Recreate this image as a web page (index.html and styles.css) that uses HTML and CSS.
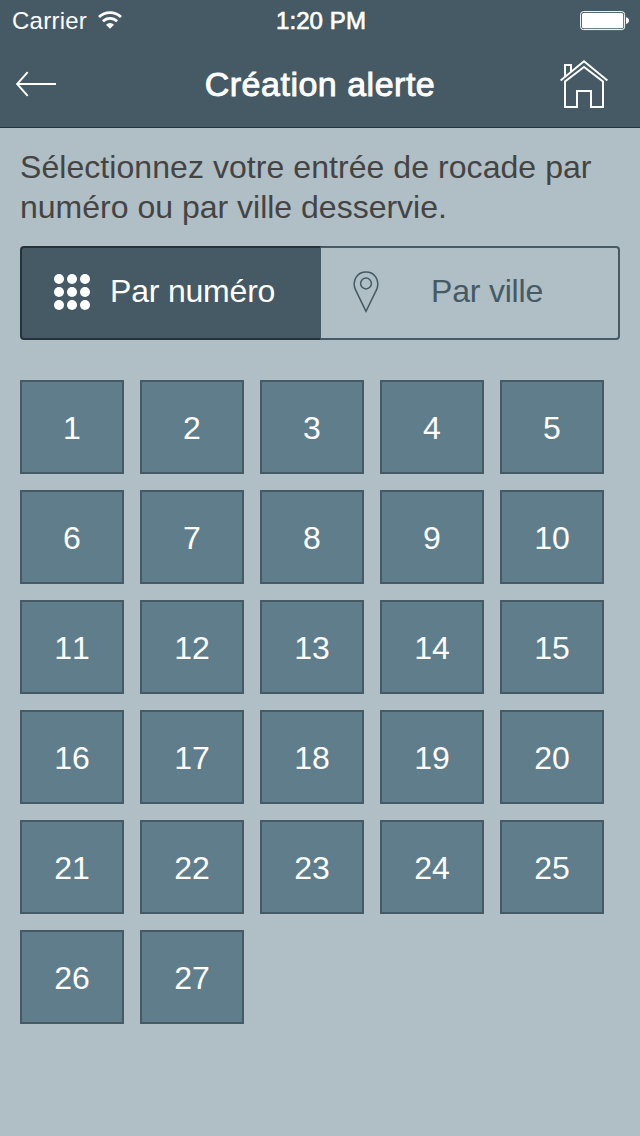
FILE: index.html
```html
<!DOCTYPE html>
<html lang="fr">
<head>
<meta charset="utf-8">
<title>Création alerte</title>
<link rel="stylesheet" href="styles.css">
</head>
<body>
<header class="header">
  <div class="status">
    <div class="network">
      <span class="carrier">Carrier</span>
      <svg class="wifi" width="24" height="18" viewBox="0 0 24 18">
        <path d="M1 6.100a15.600 15.600 0 0 1 22 0" fill="none" stroke="#fff" stroke-width="2.800"/>
        <path d="M4.900 10.300a10 10 0 0 1 14.200 0" fill="none" stroke="#fff" stroke-width="2.700"/>
        <path d="M8 13.700a5.700 5.700 0 0 1 8 0L12 17.800z" fill="#fff"/>
      </svg>
    </div>
    <span class="time">1:20 PM</span>
    <svg class="battery" width="50" height="20" viewBox="0 0 50 20">
      <rect x=".6" y=".6" width="44" height="18" rx="2.8" fill="none" stroke="#fff" stroke-width="1"/>
      <rect x="2" y="2" width="41.2" height="15.2" rx="1.5" fill="#fff"/>
      <path d="M46 6.2c2 .4 3 1.600 3 3.400s-1 3-3 3.400z" fill="#fff"/>
    </svg>
  </div>
  <nav class="navbar">
    <svg class="back" width="42" height="26" viewBox="0 0 42 26" fill="none" stroke="#fff" stroke-width="1.9">
      <path d="M2 13H41M12.700 1.200L2.100 13L12.700 24.800"/>
    </svg>
    <h1 class="title">Création alerte</h1>
    <svg class="home" width="48" height="48" viewBox="0 0 48 48" fill="none" stroke="#fff" stroke-width="2">
      <path d="M.6 20.600L24 1.300L47.400 20.600"/>
      <path d="M5 20.500V47H17V31H31V47H43V21.500L24 7L5 21.500"/>
      <path d="M5 17V5H11V12"/>
    </svg>
  </nav>
</header>
<main class="content">
  <p class="intro"><span class="line-wide">Sélectionnez votre entrée de rocade par</span> numéro ou par ville desservie.</p>
  <div class="segments">
    <button class="segment active">
      <svg class="dots" width="36" height="36" viewBox="0 0 36 36" fill="#fff">
        <circle cx="5" cy="5" r="5"/><circle cx="18" cy="5" r="5"/><circle cx="31" cy="5" r="5"/>
        <circle cx="5" cy="18" r="5"/><circle cx="18" cy="18" r="5"/><circle cx="31" cy="18" r="5"/>
        <circle cx="5" cy="31" r="5"/><circle cx="18" cy="31" r="5"/><circle cx="31" cy="31" r="5"/>
      </svg>
      <span class="label">Par numéro</span>
    </button>
    <button class="segment idle">
      <svg class="pin" width="26" height="42" viewBox="0 0 26 42" fill="none" stroke="#455a64" stroke-width="1.500">
        <path d="M13 40.300L2.200 18.200C-1.200 9 4.600 1 13 1S27.200 9 23.800 18.200Z"/>
        <circle cx="13" cy="12.500" r="5.400"/>
      </svg>
      <span class="label">Par ville</span>
    </button>
  </div>
  <div class="grid">
    <button class="tile">1</button><button class="tile">2</button><button class="tile">3</button><button class="tile">4</button><button class="tile">5</button>
    <button class="tile">6</button><button class="tile">7</button><button class="tile">8</button><button class="tile">9</button><button class="tile">10</button>
    <button class="tile">11</button><button class="tile">12</button><button class="tile">13</button><button class="tile">14</button><button class="tile">15</button>
    <button class="tile">16</button><button class="tile">17</button><button class="tile">18</button><button class="tile">19</button><button class="tile">20</button>
    <button class="tile">21</button><button class="tile">22</button><button class="tile">23</button><button class="tile">24</button><button class="tile">25</button>
    <button class="tile">26</button><button class="tile">27</button>
  </div>
</main>
</body>
</html>
```
FILE: styles.css
```css
* { box-sizing: border-box; }
body {
  margin: 0;
  min-height: 1136px;
  background: #b0bec5;
  color: #444;
  font-family: "Liberation Sans", Arial, sans-serif;
}
svg { display: block; flex: none; }
button { font: inherit; margin: 0; border-radius: 0; }
.header {
  height: 128px;
  background: #455a64;
  border-bottom: 1px solid #263238;
  color: #fff;
}
.status {
  display: grid;
  grid-template-columns: 1fr auto 1fr;
  align-items: center;
  height: 41px;
  padding: 0 10px 0 12px;
  font-size: 24px;
  line-height: 41px;
}
.network { display: flex; align-items: center; gap: 11px; }
.wifi { margin-bottom: 1px; }
.carrier { letter-spacing: 0.25px; }
.time { -webkit-text-stroke: 0.7px #fff; letter-spacing: 0.1px; }
.battery { justify-self: end; }
.navbar {
  display: grid;
  grid-template-columns: 1fr auto 1fr;
  align-items: center;
  height: 86px;
  padding: 0 32px 0 15px;
}
.title {
  margin: 0;
  padding-left: 17px;
  font-size: 34px;
  font-weight: 400;
  line-height: 40px;
  letter-spacing: 0.5px;
  -webkit-text-stroke: 0.9px #fff;
}
.home { justify-self: end; }
.content { padding: 19px 20px 0; }
.intro { margin: 0; font-size: 32px; line-height: 40px; }
.line-wide { letter-spacing: 0.06px; }
.segments {
  display: flex;
  height: 94px;
  margin-top: 19px;
}
.segment {
  display: flex;
  align-items: center;
  padding: 0 0 2px;
  font-size: 32px;
  line-height: 40px;
}
.label { padding-bottom: 2px; letter-spacing: -0.2px; }
.active {
  width: 301px;
  padding-left: 32px;
  gap: 20px;
  background: #455a64;
  border: 2px solid #263238;
  border-right: 1px solid #455a64;
  border-radius: 4px 0 0 4px;
  color: #fff;
}
.idle {
  flex: 1;
  padding-left: 32px;
  gap: 52px;
  background: transparent;
  border: 2px solid #455a64;
  border-left: 0;
  border-radius: 0 4px 4px 0;
  color: #455a64;
}
.grid {
  display: grid;
  grid-template-columns: repeat(5, 104px);
  grid-auto-rows: 94px;
  gap: 16px;
  margin-top: 40px;
}
.tile {
  padding: 2px 0 0;
  background: #607d8b;
  border: 2px solid #455a64;
  color: #fff;
  font-size: 32px;
  font-kerning: none;
  line-height: 40px;
}
```
